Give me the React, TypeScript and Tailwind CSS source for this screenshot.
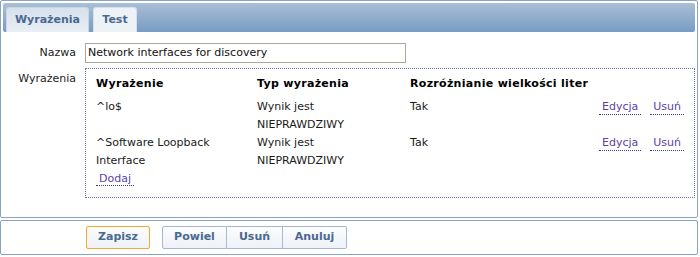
import React from "react";

const link =
  "text-[#5b3fa6] border-b border-dotted border-[#3a3aa0] px-[3px] leading-[15px]";

function Row({ a, a2, b, b2 }: { a: string; a2?: string; b: string; b2: string }) {
  return (
    <div className="flex">
      <div className="w-[161px] shrink-0">
        <div className="h-[18px] leading-[18px]">{a}</div>
        {a2 && <div className="h-[18px] leading-[18px]">{a2}</div>}
      </div>
      <div className="w-[153px] shrink-0">
        <div className="h-[18px] leading-[18px]">{b}</div>
        <div className="h-[18px] leading-[18px]">{b2}</div>
      </div>
      <div className="w-[189px] shrink-0 h-[18px] leading-[18px]">Tak</div>
      <div className="flex gap-[9px] h-[18px] items-start pt-[1px]">
        <span className={link}>Edycja</span>
        <span className={link}>Usuń</span>
      </div>
    </div>
  );
}

export default function App() {
  return (
    <div className="w-[700px] h-[257px] bg-white text-[11px] text-[#1a1a1a] font-['DejaVu_Sans',sans-serif]">
      <div className="w-[698px] h-[218px] border border-[#8aa3c0] rounded-[2px] flex flex-col">
        <div className="mx-[2px] mt-[2px] h-[29px] bg-gradient-to-b from-[#aabfd6] to-[#779cc3] rounded-[2px] flex items-end pl-[3px] gap-[4px]">
          <div className="w-[83px] h-[25px] rounded-t-[3px] border border-b-0 border-[#c9d6e4] bg-gradient-to-b from-[#d7e1ec] to-[#e8eef5] flex items-center justify-center font-bold text-[#4a6990]">
            Wyrażenia
          </div>
          <div className="w-[44px] h-[25px] rounded-t-[3px] border border-b-0 border-[#d6e0ea] bg-[#edf2f7] flex items-center justify-center font-bold text-[#4a6990]">
            Test
          </div>
        </div>
        <div className="pt-[11px] grid grid-cols-[75px_1fr] gap-x-[9px]">
          <div className="text-right h-[20px] leading-[20px] text-[#222]">Nazwa</div>
          <div className="w-[321px] h-[20px] border border-[#a9a89a] px-[2px] leading-[18px] text-[#111]">
            Network interfaces for discovery
          </div>
          <div className="text-right mt-[5px] pt-[3px] text-[#222]">Wyrażenia</div>
          <div className="mt-[5px] w-[610px] h-[130px] border border-dotted border-[#6a78b0] pl-[10px] pt-[6px]">
            <div className="flex font-bold text-[#000] h-[18px] leading-[18px] mb-[5px] tracking-[0.3px]">
              <div className="w-[161px]">Wyrażenie</div>
              <div className="w-[153px]">Typ wyrażenia</div>
              <div>Rozróżnianie wielkości liter</div>
            </div>
            <Row a="^lo$" b="Wynik jest" b2="NIEPRAWDZIWY" />
            <Row a="^Software Loopback" a2="Interface" b="Wynik jest" b2="NIEPRAWDZIWY" />
            <div className="h-[18px] pt-[1px]">
              <span className={link}>Dodaj</span>
            </div>
          </div>
        </div>
      </div>
      <div className="mt-[2px] w-[698px] h-[35px] border border-[#8aa3c0] rounded-[2px] flex items-center pl-[85px]">
        <button className="w-[64px] h-[23px] border border-[#f5a92e] rounded-[2px] bg-gradient-to-b from-[#fbfcfd] to-[#eef2f7] font-bold text-[#4a6990]">
          Zapisz
        </button>
        <div className="ml-[12px] flex">
          <button className="w-[65px] h-[23px] border border-[#a5b8cf] rounded-l-[2px] bg-gradient-to-b from-[#fbfcfd] to-[#eef2f7] font-bold text-[#4a6990]">
            Powiel
          </button>
          <button className="w-[56px] h-[23px] border border-l-0 border-[#a5b8cf] bg-gradient-to-b from-[#fbfcfd] to-[#eef2f7] font-bold text-[#4a6990]">
            Usuń
          </button>
          <button className="w-[64px] h-[23px] border border-l-0 border-[#a5b8cf] rounded-r-[2px] bg-gradient-to-b from-[#fbfcfd] to-[#eef2f7] font-bold text-[#4a6990]">
            Anuluj
          </button>
        </div>
      </div>
    </div>
  );
}
